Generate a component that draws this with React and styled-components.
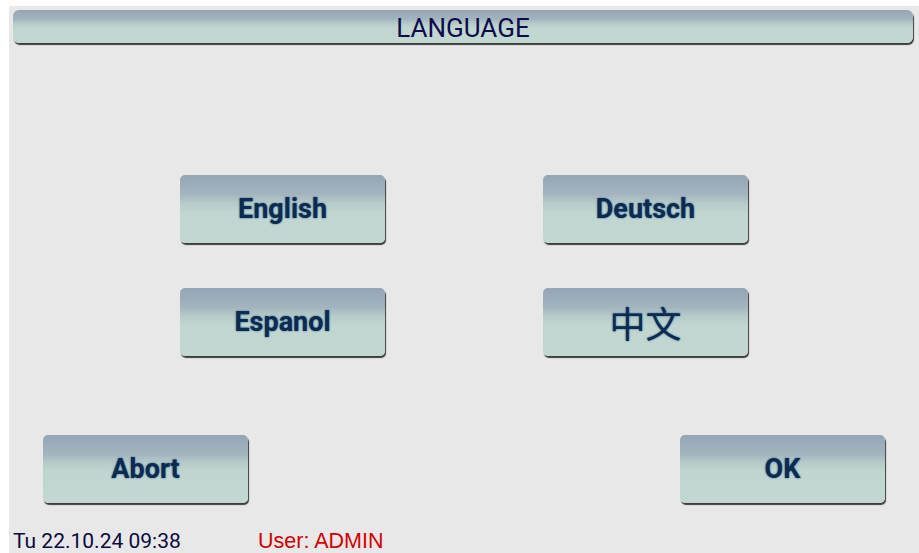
import React from 'react'
import styled, { createGlobalStyle } from 'styled-components'

const GlobalStyle = createGlobalStyle`
    html, body {
        margin: 0;
        padding: 0;
        background: #ffffff;
    }
    body {
        font-family: Roboto, "Noto Sans", sans-serif;
    }
`

const Screen = styled.div`
    margin: 6px 0 0 9px;
    width: 910px;
    height: 547px;
    background: #e8e8e8;
    display: flex;
    flex-direction: column;
    overflow: hidden;
`

const bar = `
    background: linear-gradient(to bottom, #95a5b5 0%, #a3b4bf 28%, #b7ccca 42%, #c1d6d0 55%, #c2d7d1 100%);
    box-shadow: 1px 2px 1px #3c3c3c;
`

const TitleBar = styled.div`
    ${bar}
    margin: 4px 6px 0 4px;
    height: 35px;
    padding-top: 2px;
    box-sizing: border-box;
    border-radius: 6px;
    display: flex;
    align-items: center;
    justify-content: center;
    font-size: 26px;
    color: #0c0c4c;
`

const LangGrid = styled.div`
    display: grid;
    grid-template-columns: 205px 205px;
    column-gap: 158px;
    row-gap: 45px;
    margin: 132px 0 0 171px;
`

const Button = styled.button`
    ${bar}
    width: 205px;
    height: 68px;
    border: none;
    border-radius: 5px;
    padding: 0;
    display: flex;
    align-items: center;
    justify-content: center;
    font-family: Roboto, "Noto Sans CJK SC", sans-serif;
    font-weight: ${p => (p.$cjk ? 400 : 700)};
    font-size: ${p => (p.$cjk ? '36px' : '27px')};
    color: #0e2a4e;
    text-shadow: 0 0 2px #1f5a90;
    cursor: pointer;
`

const BottomRow = styled.div`
    display: flex;
    justify-content: space-between;
    padding: 0 34px;
    margin-top: 79px;
`

const Footer = styled.div`
    display: flex;
    margin-top: 26px;
    padding-left: 4px;
    line-height: 24px;
`

const DateText = styled.span`
    width: 245px;
    color: #0a0a40;
    font-family: Roboto, sans-serif;
    font-size: 21px;
`

const UserText = styled.span`
    color: #d40000;
    font-family: "Liberation Sans", Arial, sans-serif;
    font-size: 21.5px;
`

export default function App() {
    return (
        <>
            <GlobalStyle />
            <Screen>
                <TitleBar>LANGUAGE</TitleBar>
                <LangGrid>
                    <Button>English</Button>
                    <Button>Deutsch</Button>
                    <Button>Espanol</Button>
                    <Button $cjk>中文</Button>
                </LangGrid>
                <BottomRow>
                    <Button>Abort</Button>
                    <Button>OK</Button>
                </BottomRow>
                <Footer>
                    <DateText>Tu 22.10.24 09:38</DateText>
                    <UserText>User: ADMIN</UserText>
                </Footer>
            </Screen>
        </>
    )
}
